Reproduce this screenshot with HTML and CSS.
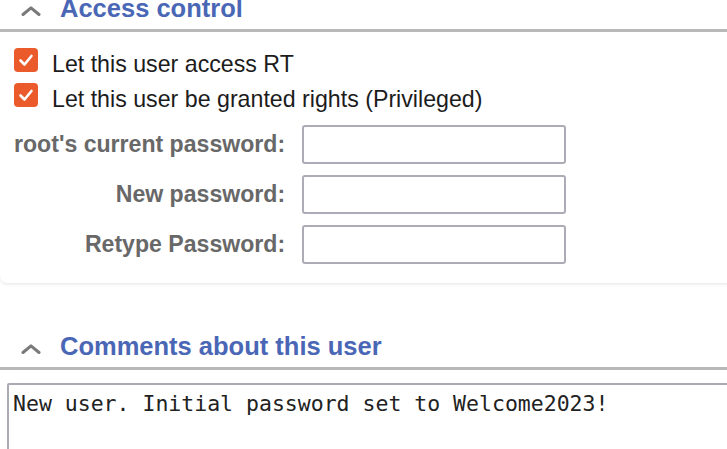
FILE: index.html
```html
<!DOCTYPE html>
<html lang="en">
<head>
<meta charset="utf-8">
<title>User access</title>
<link rel="stylesheet" href="styles.css">
</head>
<body>
<div class="page">
  <section class="card">
    <div class="titlebar">
      <svg class="chevron" width="20" height="10" viewBox="0 0 20 10"><polyline points="2,8.5 10,1.8 18,8.5" fill="none" stroke="#7a7a7a" stroke-width="3" stroke-linecap="round" stroke-linejoin="round"/></svg>
      <h2 class="title">Access control</h2>
    </div>
    <div class="card-body">
      <label class="check-row">
        <span class="check"><svg width="24" height="24" viewBox="0 0 24 24"><polyline points="6.5,12.5 10.5,16.5 17.5,8" fill="none" stroke="#fff" stroke-width="2.6" stroke-linecap="round" stroke-linejoin="round"/></svg></span>
        <span class="check-text">Let this user access RT</span>
      </label>
      <label class="check-row">
        <span class="check"><svg width="24" height="24" viewBox="0 0 24 24"><polyline points="6.5,12.5 10.5,16.5 17.5,8" fill="none" stroke="#fff" stroke-width="2.6" stroke-linecap="round" stroke-linejoin="round"/></svg></span>
        <span class="check-text">Let this user be granted rights (Privileged)</span>
      </label>
      <div class="form-grid">
        <span class="label">root's current password:</span>
        <input class="field" type="password">
        <span class="label">New password:</span>
        <input class="field" type="password">
        <span class="label">Retype Password:</span>
        <input class="field" type="password">
      </div>
    </div>
  </section>
  <section class="section">
    <div class="titlebar">
      <svg class="chevron" width="20" height="10" viewBox="0 0 20 10"><polyline points="2,8.5 10,1.8 18,8.5" fill="none" stroke="#7a7a7a" stroke-width="3" stroke-linecap="round" stroke-linejoin="round"/></svg>
      <h2 class="title">Comments about this user</h2>
    </div>
    <textarea class="comments">New user. Initial password set to Welcome2023!</textarea>
  </section>
</div>
</body>
</html>
```
FILE: styles.css
```css
html, body {
  margin: 0;
  padding: 0;
  background: #fff;
  overflow: hidden;
  height: 100%;
}
body {
  font-family: "Liberation Sans", Arial, sans-serif;
  color: #222;
}
.page {
  margin-top: -7px;
  margin-right: -30px;
}
.card {
  background: #fff;
  border-radius: 0 0 7px 7px;
  box-shadow: 0 2px 3px rgba(0, 0, 0, 0.07), 0 0 1px rgba(0, 0, 0, 0.05);
}
.titlebar {
  display: flex;
  align-items: flex-start;
  gap: 19px;
  padding: 0 0 6px 21px;
  border-bottom: 3px solid #b8b8b8;
}
.chevron {
  margin-top: 13px;
  flex: none;
}
.title {
  margin: 0;
  font-size: 25.5px;
  line-height: 30px;
  font-weight: bold;
  color: #4a67b6;
}
.card-body {
  padding: 14px 0 19px 14px;
}
.check-row {
  display: flex;
  align-items: flex-start;
  gap: 14px;
  height: 35px;
}
.check {
  margin-top: 2px;
  width: 24px;
  height: 24px;
  border-radius: 4px;
  background: #ea5a2a;
  display: flex;
  flex: none;
}
.check-text {
  font-size: 23.2px;
  line-height: 36px;
  color: #1c1c1c;
}
.form-grid {
  margin-top: 9px;
  display: grid;
  grid-template-columns: max-content 264px;
  column-gap: 17px;
  row-gap: 11px;
  align-items: center;
}
.label {
  text-align: right;
  font-size: 23.1px;
  font-weight: bold;
  color: #686868;
}
.field {
  box-sizing: border-box;
  width: 264px;
  height: 39px;
  margin: 0;
  border: 2px solid #acacb6;
  border-radius: 3px;
  background: #fff;
}
.section {
  margin-top: 48px;
}
.comments {
  display: block;
  box-sizing: border-box;
  margin: 13px 0 0 7px;
  width: 760px;
  height: 120px;
  padding: 6px 4px;
  border: 2px solid #aaaab3;
  border-radius: 2px;
  font-family: "DejaVu Sans Mono", monospace;
  font-size: 21.5px;
  line-height: 26px;
  color: #222;
  resize: none;
  background: #fff;
}
```
